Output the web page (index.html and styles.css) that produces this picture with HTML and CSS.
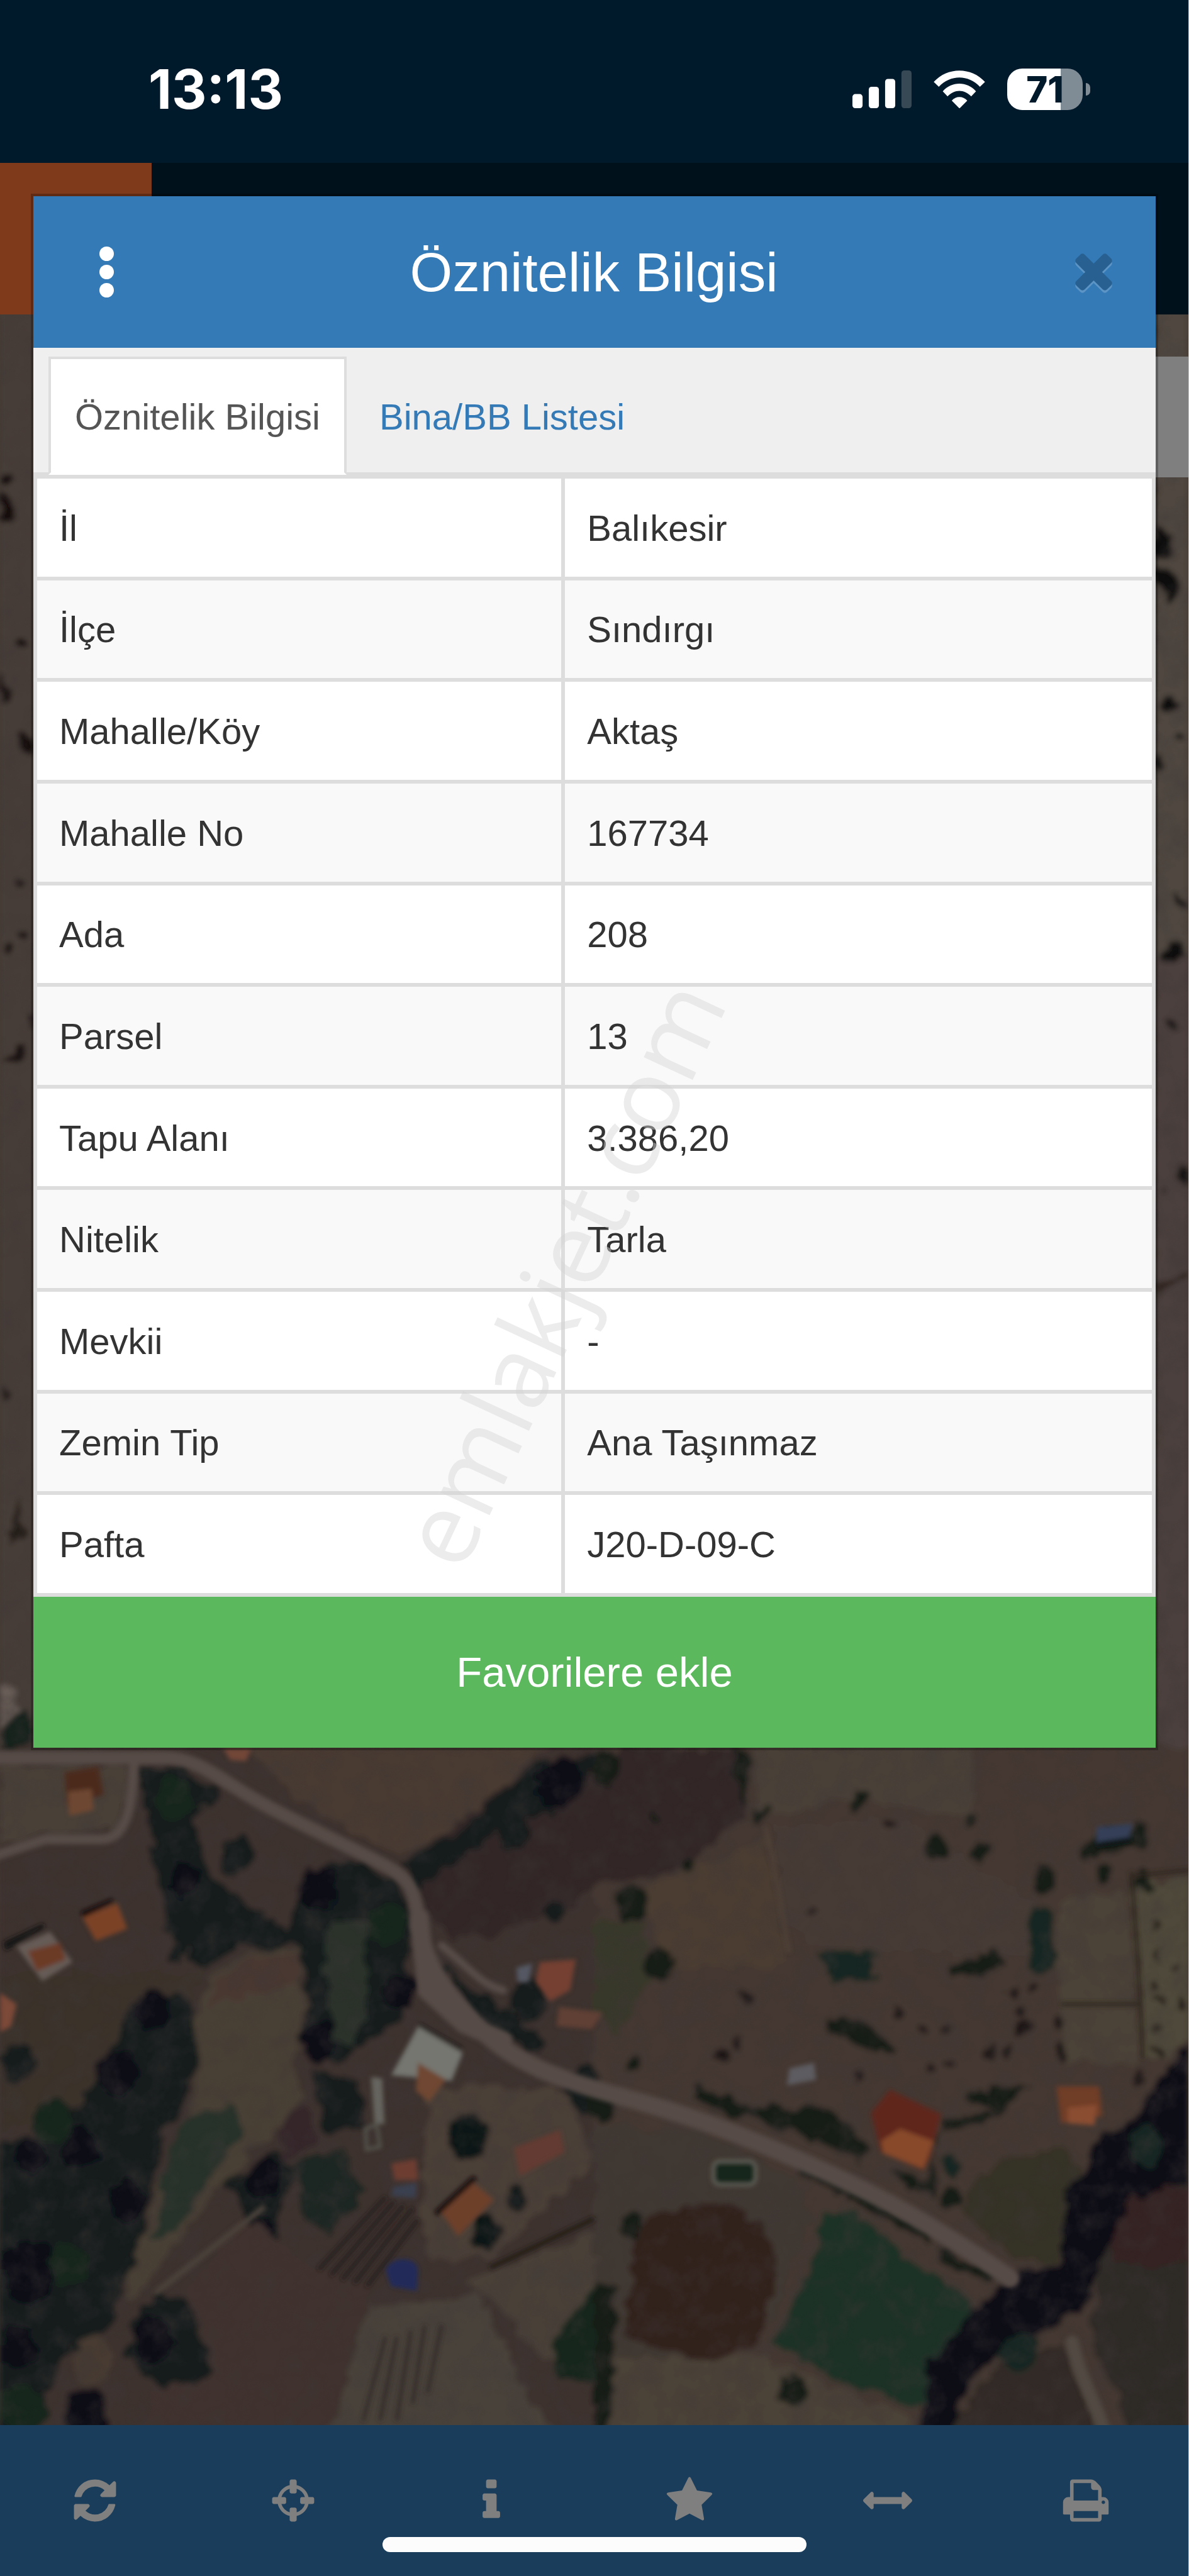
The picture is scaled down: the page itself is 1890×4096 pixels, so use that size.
FILE: index.html
```html
<!DOCTYPE html>
<html lang="tr">
<head>
<meta charset="utf-8">
<meta name="viewport" content="width=device-width, initial-scale=1">
<title>Öznitelik Bilgisi</title>
<link rel="stylesheet" href="styles.css">
</head>
<body>
<div class="page">
  <div class="statusbar">
    <span class="clock">13:13</span>
    <div class="indicators">
      <svg class="signal" viewBox="0 0 105 67" aria-hidden="true">
        <g fill="#fff"><rect x="0" y="42" width="18" height="25" rx="5"/><rect x="29" y="29" width="18" height="38" rx="5"/><rect x="58" y="15" width="18" height="52" rx="5"/></g>
        <rect x="87" y="0" width="18" height="67" rx="5" fill="#364955"/>
      </svg>
      <svg class="wifi" viewBox="0 0 91 67" fill="#fff" aria-hidden="true">
        <path d="M0 20.500C24-6.500 67-6.500 91 20.500L82 29C61.500 7 29.500 7 9 29Z"/>
        <path d="M16 37C32 19 59 19 75 37L66.500 46C54 33 37 33 24.500 46Z"/>
        <path d="M32 53.500C39 45 52 45 59.500 53.500L45.700 67.500Z"/>
      </svg>
      <div class="battery"><span class="battery-level">71</span></div>
      <span class="battery-cap"></span>
    </div>
  </div>

  <header class="appbar"><div class="appbar-menu"></div></header>

  <main class="map">
    <svg class="imagery" viewBox="0 562 2126 3776" preserveAspectRatio="xMidYMid slice" aria-hidden="true">
      <defs>
        <filter id="terrain" x="0" y="540" width="2126" height="3820" filterUnits="userSpaceOnUse" primitiveUnits="userSpaceOnUse">
          <feTurbulence type="fractalNoise" baseFrequency="0.03" numOctaves="3" seed="4" result="n"/>
          <feDisplacementMap in="SourceGraphic" in2="n" scale="34" xChannelSelector="R" yChannelSelector="G"/>
          <feGaussianBlur stdDeviation="5"/>
        </filter>
        <filter id="soft" x="-10%" y="-10%" width="120%" height="120%"><feGaussianBlur stdDeviation="4"/></filter>
        <filter id="mottle" x="0" y="0" width="100%" height="100%">
          <feTurbulence type="fractalNoise" baseFrequency="0.022" numOctaves="4" seed="9"/>
          <feColorMatrix values="0 0 0 0 0.05  0 0 0 0 0.04  0 0 0 0 0.04  1.6 0 0 0 -0.66"/>
        </filter>
      </defs>
      <rect x="0" y="562" width="2126" height="3776" fill="#443a34"/>

      <g filter="url(#terrain)">
        <!-- strip west of the dialog -->
        <g transform="translate(0 560) scale(.333 1.645)">
          <rect x="-60" y="-20" width="300" height="1620" fill="#463c37"/>
          <g fill="#120b0b">
            <ellipse cx="35" cy="180" rx="34" ry="7"/><path d="M0 190L60 205 100 220 70 232 0 225Z"/><ellipse cx="112" cy="357" rx="24" ry="6"/>
            <path d="M0 390L40 400 75 412 50 428 0 422Z"/><ellipse cx="145" cy="467" rx="42" ry="10"/><ellipse cx="105" cy="620" rx="18" ry="5"/><ellipse cx="48" cy="690" rx="26" ry="6"/><ellipse cx="122" cy="675" rx="20" ry="4"/>
            <path d="M30 812L80 795 150 800 100 815Z"/><ellipse cx="170" cy="769" rx="16" ry="5"/><ellipse cx="35" cy="1173" rx="24" ry="6"/><path d="M30 1330L100 1290 150 1330 60 1342Z" fill="#241a18"/>
          </g>
          <path d="M0 1490L80 1495 90 1530 0 1540Z" fill="#6b5f59"/>
          <path d="M0 1545L100 1520 186 1540V1570H0Z" fill="#17211b"/>
        </g>
        <!-- strip east of the dialog -->
        <g transform="translate(2064 560) scale(.333 1.645)">
          <rect y="-20" width="260" height="1620" fill="#4c413c"/>
          <rect y="-20" width="260" height="720" fill="#50463f"/>
          <g fill="#100c0c">
            <path d="M0 228L60 240 110 250 100 268 0 268Z"/><path d="M0 275L80 275 165 298 100 312 0 298Z"/><ellipse cx="80" cy="424" rx="44" ry="9"/><ellipse cx="140" cy="461" rx="26" ry="5"/>
            <ellipse cx="25" cy="488" rx="28" ry="8"/><path d="M100 630L186 640 180 650 130 645Z"/><ellipse cx="110" cy="696" rx="46" ry="9"/><ellipse cx="93" cy="774" rx="38" ry="5"/><ellipse cx="170" cy="938" rx="28" ry="12"/><ellipse cx="58" cy="955" rx="20" ry="4"/>
          </g>
          <path d="M0 1058L186 1048" stroke="#2e221e" stroke-width="8"/>
        </g>

        <!-- western half -->
        <g transform="translate(0 3100) scale(.678 .797)">
          <rect x="-60" y="30" width="1640" height="1580" fill="#3c322e"/>
          <path d="M650 30H1440L1250 180 1060 280 950 230 780 140Z" fill="#4a3b32"/>
          <path d="M1060 300L1420 60 1568 40V360L1300 460 1170 450Z" fill="#332827"/>
          <path d="M0 70H340L330 210 0 250Z" fill="#483f38"/>
          <path d="M0 540H540L330 800 0 900Z" fill="#3b302c"/>
          <!-- woodland -->
          <g fill="#121a1b">
            <path d="M360 80L470 70 580 130 500 200 560 330 640 370 780 460 740 490 620 480 540 540 440 440 400 240Z"/>
            <path d="M350 600L480 590 530 650 500 800 430 900 410 1020 340 1200 300 1320 180 1390 60 1600H-60V930L120 900 240 800Z"/>
            <path d="M800 330L900 280 1050 320 1090 420 1060 640 960 700 880 740 800 690 810 540 760 450Z"/>
            <path d="M1060 290L1230 210 1420 60 1568 50 1530 150 1330 210 1200 290 1090 350Z"/>
            <path d="M580 980L640 1000 720 940 790 970 730 1080 740 1150 680 1160 650 1080Z"/>
            <path d="M410 1260L480 1270 560 1390 540 1450 430 1470 330 1400 350 1320Z"/>
            <path d="M780 960L900 940 960 1020 870 1130 800 1080Z" fill="#1d2822"/>
            <path d="M820 760L940 770 970 880 860 900Z"/>
            <path d="M1190 860L1240 840 1300 920 1260 980 1190 930Z"/><circle cx="1390" cy="600" r="48"/><circle cx="1285" cy="1115" r="42"/><circle cx="1550" cy="800" r="52"/>
            <circle cx="625" cy="275" r="45"/><circle cx="1355" cy="225" r="40"/><circle cx="1458" cy="405" r="26"/><circle cx="1360" cy="1040" r="28"/><circle cx="50" cy="740" r="45"/><circle cx="465" cy="492" r="22"/>
            <path d="M1165 520L1300 600 1450 700 1420 720 1250 640Z"/>
          </g>
          <g fill="#080d18">
            <circle cx="490" cy="330" r="40"/><circle cx="400" cy="620" r="46"/><circle cx="310" cy="760" r="52"/><circle cx="210" cy="930" r="50"/><circle cx="85" cy="950" r="40"/><circle cx="80" cy="1210" r="72"/><circle cx="340" cy="1050" r="50"/><circle cx="400" cy="1360" r="55"/><circle cx="50" cy="1380" r="50"/>
            <circle cx="840" cy="350" r="50"/><circle cx="840" cy="690" r="46"/><circle cx="1060" cy="580" r="42"/><circle cx="700" cy="1000" r="44"/><circle cx="690" cy="1120" r="36"/><circle cx="230" cy="1530" r="56"/><circle cx="1480" cy="110" r="60"/>
          </g>
          <g fill="#17281c"><circle cx="180" cy="1190" r="50"/><circle cx="140" cy="870" r="50"/><circle cx="60" cy="1520" r="60"/><circle cx="460" cy="150" r="50"/><circle cx="1020" cy="430" r="50"/></g>
          <!-- fields -->
          <path d="M550 550L650 500 790 480 800 600 780 760 800 820 720 900 600 1000 480 1130 350 1280 330 1230 440 980 520 810 510 650Z" fill="#484036"/>
          <path d="M560 560L660 510 790 490 790 560 560 610Z" fill="#483730"/>
          <path d="M480 870L620 830 640 900 540 1020 470 1120 400 1130 440 980Z" fill="#27302a"/>
          <path d="M860 430L970 420 970 620 940 700 880 690 860 560Z" fill="#29322a"/>
          <path d="M740 870L800 840 840 920 740 960Z" fill="#36282a"/>
          <path d="M560 1170L640 1080 800 1190 980 1240 860 1600H350L420 1470 540 1450 570 1390 490 1260Z" fill="#40332f"/>
          <path d="M970 1290L1260 1260 1400 1500 1480 1600H860Z" fill="#4a423a"/>
          <path d="M1230 1230L1568 1120V1240L1450 1420 1340 1310Z" fill="#4a4138"/>
          <circle cx="245" cy="1410" r="52" fill="#463b33"/>
          <path d="M1110 1080L1130 800 1240 790 1500 800 1568 960 1300 1180 1130 1180Z" fill="#4b3f37"/>
          <g fill="#0e1316"><circle cx="1235" cy="905" r="52"/><circle cx="1285" cy="1115" r="40"/><circle cx="1360" cy="1040" r="28"/></g>
          <path d="M1450 1380L1568 1230V1460L1460 1440Z" fill="#17281c"/>
        </g>

        <!-- eastern half -->
        <g transform="translate(1063 3100) scale(.678 .797)">
          <rect x="0" y="30" width="1640" height="1580" fill="#443833"/>
          <path d="M0 80L100 30 380 40 400 180 230 310 0 340Z" fill="#302525"/>
          <path d="M410 30H1000L1000 190 680 150 440 190Z" fill="#493f37"/>
          <path d="M130 350L450 240 510 500 420 530 180 520Z" fill="#4c3d31"/>
          <path d="M470 210L820 190 1160 380 1150 500 580 480 500 420Z" fill="#473b36"/>
          <path d="M1220 380L1410 350 1440 740 1240 740 1220 520Z" fill="#4b4238"/>
          <path d="M1420 340L1620 310V680L1450 740Z" fill="#50493a"/>
          <path d="M0 430L130 420 140 560 60 690 0 620Z" fill="#38392c"/>
          <path d="M0 880L300 900 520 1000 570 1080 480 1300 300 1400 0 1568Z" fill="#403832"/>
          <path d="M150 1080L300 1050 440 1100 480 1180 440 1370 290 1410 90 1360 100 1170Z" fill="#30211f"/>
          <path d="M610 1070L690 1080 830 1180 1010 1270 970 1440 850 1510 680 1470 470 1370 570 1200Z" fill="#1f3226"/>
          <path d="M1050 960L1240 930 1300 1010 1220 1190 1130 1190 960 1070Z" fill="#363127"/>
          <path d="M1330 1190L1420 1020 1620 1010V1600H1440L1310 1360Z" fill="#2d2a25"/>
          <path d="M1380 1060L1480 1010 1620 1040V1200L1360 1190Z" fill="#352423"/>
          <path d="M60 1400L440 1400 840 1540 830 1600H40Z" fill="#4b4239"/>
          <path d="M1060 1420L1240 1370 1340 1600H900Z" fill="#332c25"/>
          <!-- trees and hedges -->
          <g fill="#131a18">
            <circle cx="30" cy="75" r="38"/><path d="M370 40H410L400 170 370 110Z"/><circle cx="95" cy="380" r="40"/><circle cx="170" cy="520" r="38"/><circle cx="250" cy="300" r="20"/><circle cx="700" cy="148" r="24"/><circle cx="900" cy="255" r="27"/><circle cx="1020" cy="260" r="22"/><circle cx="995" cy="200" r="16"/><circle cx="1187" cy="325" r="32"/><circle cx="1345" cy="320" r="20"/><circle cx="1445" cy="332" r="25"/><circle cx="440" cy="185" r="16"/><circle cx="165" cy="182" r="13"/>
            <path d="M1280 280L1300 235 1450 200 1460 250 1360 270Z"/>
            <path d="M620 640L700 640 800 710 790 730 700 700 620 680Z"/>
            <path d="M270 790L420 840 620 840 720 920 700 960 520 890 340 850 260 820Z"/>
            <path d="M540 950L720 1030 890 1120 880 1140 700 1060 540 990Z"/>
            <path d="M910 1150L1050 1210 1040 1230 930 1190Z"/>
            <path d="M940 520L1060 490 1090 530 940 550Z"/>
            <path d="M900 900L1060 860 1150 790 980 800 990 830 1060 850 920 870 880 1000 780 980 840 1030 900 1040Z"/>
            <circle cx="100" cy="1110" r="32"/><circle cx="525" cy="1480" r="36"/><circle cx="940" cy="1045" r="22"/><circle cx="100" cy="745" r="18"/><circle cx="15" cy="830" r="42"/><path d="M0 1220L60 1240 40 1568H0Z"/>
          </g>
          <g fill="#090e18">
            <path d="M1010 1290L1120 1210 1230 1190 1250 1010 1290 990 1310 920 1420 860 1620 640V1010L1420 1040 1350 1160 1290 1300 1120 1370 1000 1440 930 1600H850L880 1410Z"/>
          </g>
          <g fill="#182820"><path d="M580 490L740 490 740 550 640 560Z"/><path d="M1150 400L1200 400 1220 540 1160 540Z"/><circle cx="1120" cy="1390" r="46"/><circle cx="1460" cy="930" r="44"/><circle cx="940" cy="970" r="26"/></g>
          <g fill="#1a1513">
            <circle cx="398" cy="592" r="14"/><circle cx="805" cy="627" r="12"/><circle cx="930" cy="660" r="11"/><circle cx="1120" cy="625" r="15"/><circle cx="1135" cy="660" r="15"/><circle cx="1092" cy="712" r="14"/><circle cx="1230" cy="716" r="17"/><circle cx="1230" cy="650" r="15"/><circle cx="890" cy="755" r="14"/><circle cx="935" cy="735" r="11"/><circle cx="1043" cy="718" r="12"/><circle cx="1148" cy="573" r="10"/><circle cx="1098" cy="582" r="11"/><circle cx="693" cy="770" r="13"/><circle cx="335" cy="716" r="13"/><circle cx="375" cy="697" r="12"/><circle cx="575" cy="402" r="11"/><circle cx="785" cy="202" r="11"/><circle cx="873" cy="670" r="8"/><circle cx="1480" cy="430" r="10"/><circle cx="1482" cy="500" r="9"/><circle cx="1484" cy="565" r="12"/><circle cx="1484" cy="600" r="12"/><circle cx="1484" cy="660" r="11"/><circle cx="1484" cy="715" r="12"/><circle cx="1545" cy="610" r="14"/><circle cx="1530" cy="520" r="8"/><circle cx="1436" cy="780" r="16"/>
          </g>
        </g>
      </g>

      <!-- surface texture -->
      <rect x="0" y="562" width="2126" height="3776" filter="url(#mottle)" opacity=".55"/>

      <!-- roads -->
      <g filter="url(#soft)" fill="none" stroke="#564c47" stroke-linecap="round" stroke-linejoin="round">
        <path d="M-10 3144H300C360 3146 400 3190 480 3232S640 3310 694 3340S742 3400 752 3460" stroke-width="24"/>
        <path d="M240 3150C236 3220 232 3290 180 3290H80L-10 3320" stroke-width="18"/>
        <path d="M748 3440C760 3520 800 3570 860 3630S1000 3720 1110 3750S1300 3808 1420 3860 1640 3960 1808 4076" stroke-width="32"/>
        <path d="M750 3430L764 3560 830 3620 900 3650" stroke-width="34"/>
        <path d="M790 3480C840 3520 860 3550 900 3560" stroke-width="14"/>
        <path d="M1918 4190C1930 4250 1960 4300 1974 4345" stroke-width="24" stroke="#514a43"/>
        <path d="M1370 3270C1390 3350 1400 3440 1412 3490" stroke-width="6" stroke="#4f4239"/>
        <path d="M280 4100L470 3950" stroke-width="10" stroke="#4c423b"/>
        <path d="M2024 3350C2032 3450 2040 3560 2044 3680M1900 3585H2034M2030 3355L2126 3345" stroke-width="6" stroke="#2e251f"/>
        <path d="M880 4055L1060 3970" stroke-width="8" stroke="#201a17"/>
      </g>

      <!-- furrows -->
      <g filter="url(#soft)" stroke="#231c1a" stroke-width="6" fill="none">
        <path d="M690 3930L570 4060M705 3938L592 4070M722 3945L612 4078M738 3950L634 4084M748 3970L656 4090"/>
        <path d="M690 4180L650 4330M710 4180L680 4330M735 4170L710 4330M760 4160L738 4300M790 4160L765 4280" stroke="#332a26"/>
      </g>

      <!-- buildings -->
      <g filter="url(#soft)">
        <path d="M116 3170L176 3160 186 3210 120 3230Z" fill="#4c2a1c"/><path d="M122 3205L164 3200 168 3238 124 3248Z" fill="#6e4733"/>
        <path d="M148 3430L210 3404 228 3450 172 3472Z" fill="#7c4325"/><path d="M144 3420L200 3396 204 3402 150 3430Z" fill="#120d0d"/><path d="M30 3482L90 3455 130 3510 76 3544Z" fill="#665b56"/><path d="M50 3490L108 3475 118 3505 66 3526Z" fill="#6c3b27"/><path d="M6 3474L78 3440 80 3448 10 3490Z" fill="#171413"/>
        <path d="M0 3565L30 3585 20 3625 0 3635Z" fill="#7d4a37"/><path d="M400 3128H450L440 3150 412 3148Z" fill="#734738"/>
        <path d="M748 3625L828 3672 808 3722 700 3712Z" fill="#75766f"/><path d="M748 3690L798 3720 768 3760 744 3740Z" fill="#704633"/><path d="M750 3622L826 3665" stroke="#171414" stroke-width="5"/>
        <path d="M664 3715L684 3718 688 3800 670 3798Z" fill="#66655f"/><path d="M654 3808L674 3800 680 3840 656 3845Z" fill="none" stroke="#55554e" stroke-width="6"/>
        <path d="M700 3870L745 3862 748 3900 706 3900Z" fill="#6d3e30"/><path d="M704 3912L746 3904 744 3932 700 3928Z" fill="#3b4150"/>
        <path d="M690 4060C700 4035 745 4035 748 4060L746 4098 700 4090Z" fill="#222b5a"/>
        <path d="M784 3950L848 3905 884 3935 820 4000Z" fill="#6d3f2c"/><path d="M780 3960L850 3895" stroke="#140e0d" stroke-width="10"/>
        <path d="M920 3842L1002 3810 1010 3850 930 3892Z" fill="#643b30"/>
        <path d="M966 3510L1030 3505 1020 3560 984 3580 958 3545Z" fill="#744130"/><path d="M1000 3590L1078 3600 1060 3630 996 3624Z" fill="#604035"/><path d="M924 3520L952 3512 946 3546 926 3545Z" fill="#555963"/>
        <path d="M1558 3780L1592 3738 1684 3782 1664 3860 1652 3882 1576 3850Z" fill="#5f281b"/><path d="M1576 3830L1610 3808 1670 3830 1652 3880 1580 3852Z" fill="#87492c"/>
        <path d="M1890 3732H1966L1972 3785 1898 3798Z" fill="#6f3c28"/><path d="M1910 3770L1962 3765 1958 3802 1910 3798Z" fill="#8a4e32"/>
        <path d="M1962 3268L2026 3262 2020 3290 1960 3298Z" fill="#343f58"/><path d="M1960 3300L2024 3290" stroke="#0e1513" stroke-width="9"/>
        <rect x="1276" y="3866" width="76" height="42" rx="12" fill="#13261f" stroke="#5f5f57" stroke-width="6"/>
        <path d="M1412 3700L1456 3690 1460 3720 1408 3730Z" fill="#5d5c60"/>
      </g>
    </svg>
    <button class="layers" type="button" aria-label="Katmanlar"></button>
  </main>

  <nav class="toolbar" aria-label="Harita araçları">
    <button type="button" aria-label="Yenile"><svg viewBox="0 0 1792 1792"><path d="M1639 1056q0 5-1 7-64 268-268 434.500t-478 166.500q-146 0-282.500-55t-243.500-157l-129 129q-19 19-45 19t-45-19-19-45v-448q0-26 19-45t45-19h448q26 0 45 19t19 45-19 45l-137 137q71 66 161 102t187 36q134 0 250-65t186-179q11-17 53-117 8-23 30-23h192q13 0 22.500 9.500t9.500 22.500zm25-800v448q0 26-19 45t-45 19h-448q-26 0-45-19t-19-45 19-45l138-138q-148-137-349-137-134 0-250 65t-186 179q-11 17-53 117-8 23-30 23h-199q-13 0-22.500-9.500t-9.500-22.500v-7q65-268 270-434.500t480-166.500q146 0 284 55.500t245 156.500l130-129q19-19 45-19t45 19 19 45z"/></svg></button>
    <button type="button" aria-label="Konumum"><svg viewBox="0 0 1792 1792"><path d="M1325 1024h-109q-26 0-45-19t-19-45v-128q0-26 19-45t45-19h109q-32-108-112.500-188.500t-188.500-112.500v109q0 26-19 45t-45 19h-128q-26 0-45-19t-19-45v-109q-108 32-188.500 112.500t-112.500 188.500h109q26 0 45 19t19 45v128q0 26-19 45t-45 19h-109q32 108 112.500 188.500t188.500 112.500v-109q0-26 19-45t45-19h128q26 0 45 19t19 45v109q108-32 188.500-112.500t112.500-188.500zm339-192v128q0 26-19 45t-45 19h-143q-37 161-154.500 278.500t-278.500 154.500v143q0 26-19 45t-45 19h-128q-26 0-45-19t-19-45v-143q-161-37-278.500-154.500t-154.500-278.500h-143q-26 0-45-19t-19-45v-128q0-26 19-45t45-19h143q37-161 154.500-278.500t278.500-154.500v-143q0-26 19-45t45-19h128q26 0 45 19t19 45v143q161 37 278.500 154.500t154.500 278.500h143q26 0 45 19t19 45z"/></svg></button>
    <button type="button" aria-label="Bilgi"><svg viewBox="0 0 1792 1792"><path d="M1216 1344v128q0 26-19 45t-45 19h-512q-26 0-45-19t-19-45v-128q0-26 19-45t45-19h64v-384h-64q-26 0-45-19t-19-45v-128q0-26 19-45t45-19h384q26 0 45 19t19 45v576h64q26 0 45 19t19 45zm-128-1152v192q0 26-19 45t-45 19h-256q-26 0-45-19t-19-45v-192q0-26 19-45t45-19h256q26 0 45 19t19 45z"/></svg></button>
    <button type="button" aria-label="Favoriler"><svg viewBox="0 0 1792 1792"><path d="M1728 647q0 22-26 48l-363 354 86 500q1 7 1 20 0 21-10.500 35.500t-30.500 14.500q-19 0-40-12l-449-236-449 236q-22 12-40 12-21 0-31.500-14.500t-10.500-35.500q0-6 2-20l86-500-364-354q-25-27-25-48 0-37 56-46l502-73 225-455q19-41 49-41t49 41l225 455 502 73q56 9 56 46z"/></svg></button>
    <button type="button" aria-label="Ölçüm"><svg viewBox="0 0 1792 1792"><path d="M1792 896q0 26-19 45l-256 256q-19 19-45 19t-45-19-19-45v-128h-1024v128q0 26-19 45t-45 19-45-19l-256-256q-19-19-19-45t19-45l256-256q19-19 45-19t45 19 19 45v128h1024v-128q0-26 19-45t45-19 45 19l256 256q19 19 19 45z"/></svg></button>
    <button type="button" aria-label="Yazdır"><svg viewBox="0 0 1792 1792"><path d="M448 1536h896v-256h-896v256zm0-640h896v-384h-160q-40 0-68-28t-28-68v-160h-640v640zm1152 64q0-26-19-45t-45-19-45 19-19 45 19 45 45 19 45-19 19-45zm128 0v416q0 13-9.500 22.500t-22.500 9.500h-224v160q0 40-28 68t-68 28h-960q-40 0-68-28t-28-68v-160h-224q-13 0-22.500-9.500t-9.500-22.500v-416q0-79 56.500-135.500t135.500-56.500h64v-544q0-40 28-68t68-28h672q40 0 88 20t76 48l152 152q28 28 48 76t20 88v256h64q79 0 135.500 56.500t56.500 135.500z"/></svg></button>
  </nav>

  <section class="dialog" role="dialog" aria-labelledby="dialog-title">
    <div class="dialog-header">
      <button class="menu-button" type="button" aria-label="Menü"><span></span><span></span><span></span></button>
      <h1 id="dialog-title">Öznitelik Bilgisi</h1>
      <button class="close-button" type="button" aria-label="Kapat"><svg viewBox="256 320 1280 1280"><path d="M1490 1322q0 40-28 68l-136 136q-28 28-68 28t-68-28l-294-294-294 294q-28 28-68 28t-68-28l-136-136q-28-28-28-68t28-68l294-294-294-294q-28-28-28-68t28-68l136-136q28-28 68-28t68 28l294 294 294-294q28-28 68-28t68 28l136 136q28 28 28 68t-28 68l-294 294 294 294q28 28 28 68z"/></svg></button>
    </div>
    <div class="tabs">
      <a class="tab tab-active" href="#oznitelik">Öznitelik Bilgisi</a>
      <a class="tab" href="#bina">Bina/BB Listesi</a>
    </div>
    <table class="attributes" id="oznitelik">
      <tbody>
        <tr><th scope="row">İl</th><td>Balıkesir</td></tr>
        <tr><th scope="row">İlçe</th><td>Sındırgı</td></tr>
        <tr><th scope="row">Mahalle/Köy</th><td>Aktaş</td></tr>
        <tr><th scope="row">Mahalle No</th><td>167734</td></tr>
        <tr><th scope="row">Ada</th><td>208</td></tr>
        <tr><th scope="row">Parsel</th><td>13</td></tr>
        <tr><th scope="row">Tapu Alanı</th><td>3.386,20</td></tr>
        <tr><th scope="row">Nitelik</th><td>Tarla</td></tr>
        <tr><th scope="row">Mevkii</th><td>-</td></tr>
        <tr><th scope="row">Zemin Tip</th><td>Ana Taşınmaz</td></tr>
        <tr><th scope="row">Pafta</th><td>J20-D-09-C</td></tr>
      </tbody>
    </table>
    <button class="favorite" type="button">Favorilere ekle</button>
  </section>

  <div class="watermark">emlakjet.com</div>
  <div class="home-indicator"></div>
</div>
</body>
</html>
```
FILE: styles.css
```css
* {
  box-sizing: border-box;
}

body {
  margin: 0;
  background: #00192b;
  font-family: "Liberation Sans", Arial, sans-serif;
  color: #333;
}

button {
  margin: 0;
  padding: 0;
  border: 0;
  background: none;
  font: inherit;
  color: inherit;
}

svg {
  display: block;
}

.page {
  position: relative;
  display: flex;
  flex-direction: column;
  min-height: 100vh;
  overflow: hidden;
  border-right: 1px solid #c8c8c8;
}

/* Status bar */

.statusbar {
  display: flex;
  align-items: center;
  justify-content: space-between;
  height: 259px;
  padding: 24px 156px 0 236px;
  color: #fff;
}

.clock {
  font: 700 86px/88px Inter, sans-serif;
}

.indicators {
  display: flex;
  align-items: center;
}

.signal {
  width: 94px;
  height: 60px;
  margin-right: 35px;
}

.wifi {
  width: 82px;
  height: 60px;
  margin-right: 35px;
}

.battery {
  display: flex;
  align-items: center;
  justify-content: center;
  width: 120px;
  height: 66px;
  border-radius: 24px;
  background: linear-gradient(to right, #fff 71%, #808c95 71%);
}

.battery-level {
  font: 800 58px/60px Inter, sans-serif;
  color: #00192b;
}

.battery-cap {
  width: 7px;
  height: 20px;
  margin-left: 5px;
  border-radius: 0 7px 7px 0;
  background: #808c95;
}

/* Application behind the dialog */

.appbar {
  height: 241px;
  background: #00111b;
}

.appbar-menu {
  width: 241px;
  height: 241px;
  background: #7f3a1b;
}

.map {
  position: relative;
  flex: 1;
  overflow: hidden;
}

.imagery {
  position: absolute;
  inset: 0;
  width: 100%;
  height: 100%;
}

.layers {
  position: absolute;
  top: 67px;
  right: 0;
  width: 240px;
  height: 192px;
  background: #7f7f7f;
}

.toolbar {
  display: grid;
  grid-template-columns: repeat(6, 1fr);
  height: 240px;
  background: #1a3d5b;
}

.toolbar button {
  display: flex;
  align-items: center;
  justify-content: center;
  padding-right: 12px;
}

.toolbar svg {
  width: 78px;
  height: 78px;
  fill: #7f7f7f;
}

/* Dialog */

.dialog {
  position: absolute;
  top: 312px;
  left: 53px;
  right: 52px;
  background: #fff;
  box-shadow: 0 0 0 4px rgba(0, 0, 0, .25);
}

.dialog-header {
  display: grid;
  grid-template-columns: 64px 1fr 64px;
  align-items: center;
  height: 241px;
  padding: 0 66px 0 84px;
  background: #337ab7;
  color: #fff;
}

.dialog-header h1 {
  margin: 0;
  padding-right: 20px;
  font-size: 87px;
  line-height: 100px;
  font-weight: 400;
  text-align: center;
}

.menu-button {
  display: flex;
  flex-direction: column;
  align-items: center;
  gap: 6px;
}

.menu-button span {
  width: 23px;
  height: 23px;
  border-radius: 50%;
  background: #fff;
}

.close-button {
  opacity: .2;
}

.close-button svg {
  width: 63px;
  height: 63px;
  fill: #000;
  filter: drop-shadow(0 4px 0 #fff);
}

.tabs {
  display: flex;
  height: 202px;
  padding: 14px 24px 0;
  border-bottom: 4px solid #ddd;
  background: #efefef;
}

.tab {
  height: 188px;
  padding: 0 40px;
  border: 4px solid transparent;
  font-size: 58px;
  line-height: 184px;
  color: #337ab7;
  text-decoration: none;
}

.tab-active {
  margin-right: 8px;
  padding: 0 38px;
  border-color: #ddd #ddd #fff;
  background: #fff;
  color: #555;
}

.attributes {
  width: 100%;
  height: 1784px;
  border-collapse: collapse;
  font-size: 58px;
  line-height: 82px;
}

.attributes th,
.attributes td {
  padding: 2px 35px 0;
  border: 6px solid #ddd;
  text-align: left;
  font-weight: 400;
}

.attributes th {
  width: 47.2%;
}

.attributes tr:nth-child(even) {
  background: #f9f9f9;
}

.favorite {
  display: block;
  width: 100%;
  height: 240px;
  background: #5cb85c;
  color: #fff;
  font-size: 67px;
  line-height: 80px;
}

/* Overlays */

.watermark {
  position: absolute;
  top: 49.4%;
  left: 47.1%;
  transform: translate(-50%, -50%) rotate(-65deg);
  font: 400 160px/200px "Open Sans", sans-serif;
  color: rgba(212, 212, 212, .45);
  pointer-events: none;
}

.home-indicator {
  position: absolute;
  bottom: 38px;
  left: 50%;
  width: 674px;
  height: 24px;
  margin-left: -337px;
  border-radius: 12px;
  background: #fcfcfc;
}
```
